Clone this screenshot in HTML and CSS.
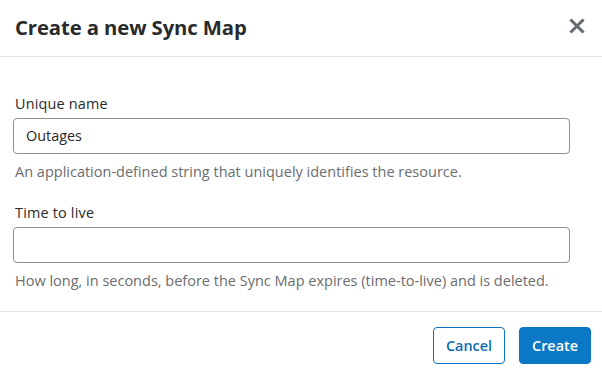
FILE: index.html
```html
<!DOCTYPE html>
<html>
<head>
<meta charset="utf-8">
<link rel="stylesheet" href="styles.css">
</head>
<body>
<div class="modal">
  <header class="modal-header">
    <h1 class="modal-title">Create a new Sync Map</h1>
    <button class="close" aria-label="Close">
      <svg width="16" height="16" viewBox="0 0 16 16"><path d="M2.5 2.5 L13.5 13.5 M13.5 2.5 L2.5 13.5" stroke="#646970" stroke-width="3" stroke-linecap="square"/></svg>
    </button>
  </header>
  <div class="modal-body">
    <div class="field">
      <label class="label">Unique name</label>
      <div class="input">Outages</div>
      <p class="help">An application-defined string that uniquely identifies the resource.</p>
    </div>
    <div class="field">
      <label class="label">Time to live</label>
      <div class="input"></div>
      <p class="help">How long, in seconds, before the Sync Map expires (time-to-live) and is deleted.</p>
    </div>
  </div>
  <footer class="modal-footer">
    <button class="btn btn-secondary">Cancel</button>
    <button class="btn btn-primary">Create</button>
  </footer>
</div>
</body>
</html>
```
FILE: styles.css
```css
* { box-sizing: border-box; }
html, body { margin: 0; padding: 0; background: #fff; }
body { font-family: "Open Sans", sans-serif; color: #282a2b; }
.modal { width: 602px; height: 377px; background: #fff; }
.modal-header {
  height: 57px;
  display: flex;
  align-items: center;
  justify-content: space-between;
  padding: 0 15px;
  border-bottom: 1px solid #e4e5e7;
}
.modal-title { margin: 0; font-size: 20.3px; font-weight: 700; color: #282a2b; line-height: 28px; padding-bottom: 3px; letter-spacing: -0.1px; }
.close { border: 0; background: none; padding: 0; margin-right: 2px; display: flex; margin-bottom: 5px; }
.modal-body { padding: 36px 32px 20px 13px; }
.field + .field { margin-top: 20px; }
.label { display: block; font-size: 14.4px; line-height: 20px; color: #282a2b; margin-left: 2px; letter-spacing: 0.2px; padding-top: 1px; }
.input {
  margin-top: 4px;
  height: 36px;
  border: 1px solid #8e9091;
  border-radius: 4px;
  padding: 0 12px;
  font-size: 14.4px;
  line-height: 34px;
  color: #282a2b;
}
.help { margin: 8px 0 0 2px; font-size: 14.5px; line-height: 20px; color: #6b6d70; }
.modal-footer {
  border-top: 1px solid #e4e5e7;
  display: flex;
  justify-content: flex-end;
  gap: 14px;
  padding: 15px 11px 0 0;
}
.btn {
  height: 37px;
  width: 72px;
  border-radius: 4px;
  font-family: "Open Sans", sans-serif;
  font-size: 14.4px;
  font-weight: 600;
  padding: 0;
}
.btn-secondary { background: #fff; color: #0b6db5; border: 1px solid #0b74c4; }
.btn-primary { background: #0b78c6; color: #fff; border: 1px solid #0b78c6; }
```
